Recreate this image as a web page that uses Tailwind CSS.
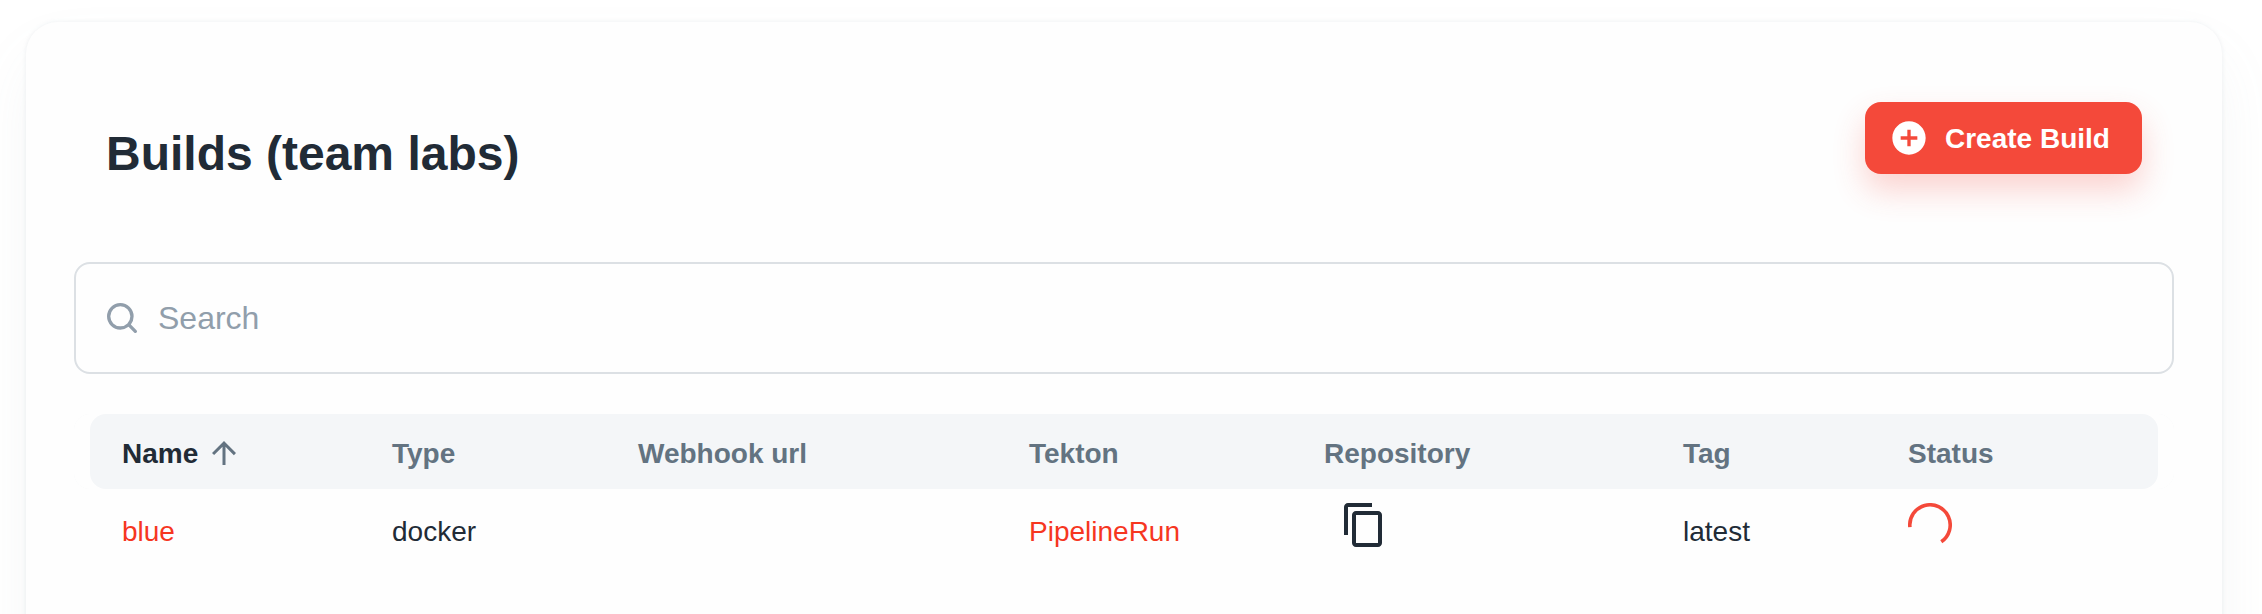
<!DOCTYPE html>
<html lang="en">
<head>
<meta charset="utf-8">
<title>Builds</title>
<script src="https://cdn.jsdelivr.net/npm/@tailwindcss/browser@4"></script>
</head>
<body class="h-[614px] overflow-hidden bg-white font-['Liberation_Sans',Arial,sans-serif] text-[#212b36]">
<main class="h-[614px] overflow-hidden pt-[22px] pr-10 pl-[26px]">
  <section class="h-[900px] rounded-[32px] bg-[#fefefe] px-12 shadow-[0_0_4px_0_rgba(145,158,171,0.16),0_32px_64px_-8px_rgba(145,158,171,0.1)]">
    <header class="flex h-60 items-start justify-between pt-20 pr-8 pl-8">
      <h1 class="pt-4 text-[48px] leading-[72px] font-bold">Builds (team labs)</h1>
      <button class="flex h-[72px] w-[277px] items-center gap-4 rounded-2xl bg-[#f4493a] pl-6 text-[28px] font-bold whitespace-nowrap text-white shadow-[0_16px_32px_0_rgba(244,73,58,0.24)]">
        <svg class="size-10 shrink-0" viewBox="0 0 24 24" fill="currentColor"><path d="M12 2C6.48 2 2 6.48 2 12s4.48 10 10 10 10-4.48 10-10S17.52 2 12 2zm5 11h-4v4h-2v-4H7v-2h4V7h2v4h4v2z"/></svg>
        <span class="pt-0.5">Create Build</span>
      </button>
    </header>
    <label class="flex h-28 items-center gap-4 rounded-2xl border-2 border-[#dce0e4] pl-[26px] text-[#919eab]">
      <svg class="size-10 shrink-0" viewBox="0 0 24 24" fill="currentColor"><path d="M20.71 19.29l-3.4-3.39A7.92 7.92 0 0 0 19 11a8 8 0 1 0-8 8 7.92 7.92 0 0 0 4.9-1.69l3.39 3.4a1 1 0 0 0 1.42 0 1 1 0 0 0 0-1.42zM5 11a6 6 0 1 1 6 6 6 6 0 0 1-6-6z"/></svg>
      <input type="text" placeholder="Search" class="h-12 grow bg-transparent text-[32px] outline-none placeholder:text-[#919eab]">
    </label>
    <div class="mt-10 text-[28px] leading-[44px]">
      <div class="grid h-[75px] grid-cols-[270px_246px_391px_295px_359px_225px_1fr] items-center rounded-2xl bg-[#f4f6f8] pt-1 pl-12 font-bold text-[#637381] shadow-[inset_16px_0_0_#fefefe,inset_-16px_0_0_#fefefe]">
        <div class="flex items-center gap-2 text-[#212b36]">Name
          <svg class="mb-[1px] size-9 text-[#637381]" viewBox="0 0 24 24" fill="currentColor"><path d="M4 12l1.41 1.41L11 7.83V20h2V7.83l5.58 5.59L20 12l-8-8-8 8z"/></svg>
        </div>
        <div>Type</div><div>Webhook url</div><div>Tekton</div><div>Repository</div><div>Tag</div><div>Status</div>
      </div>
      <div class="grid grid-cols-[270px_246px_391px_295px_359px_225px_1fr] items-start pt-3 pl-12">
        <a class="pt-[9px] text-[#f6361f]">blue</a>
        <div class="pt-[9px]">docker</div>
        <div></div>
        <a class="pt-[9px] text-[#f6361f]">PipelineRun</a>
        <div class="pl-4"><svg class="size-12" viewBox="0 0 24 24" fill="currentColor"><path d="M16 1H4c-1.1 0-2 .9-2 2v14h2V3h12V1zm3 4H8c-1.1 0-2 .9-2 2v14c0 1.1.9 2 2 2h11c1.1 0 2-.9 2-2V7c0-1.1-.9-2-2-2zm0 16H8V7h11v14z"/></svg></div>
        <div class="pt-[9px]">latest</div>
        <div class="pt-0.5"><svg class="size-11" viewBox="-22 -22 44 44" fill="none" stroke="#f4493a" stroke-width="3.6"><path d="M-20.1 2.1A20.2 20.2 0 1 1 11.3 16.75"/></svg></div>
      </div>
    </div>
  </section>
</main>
</body>
</html>
